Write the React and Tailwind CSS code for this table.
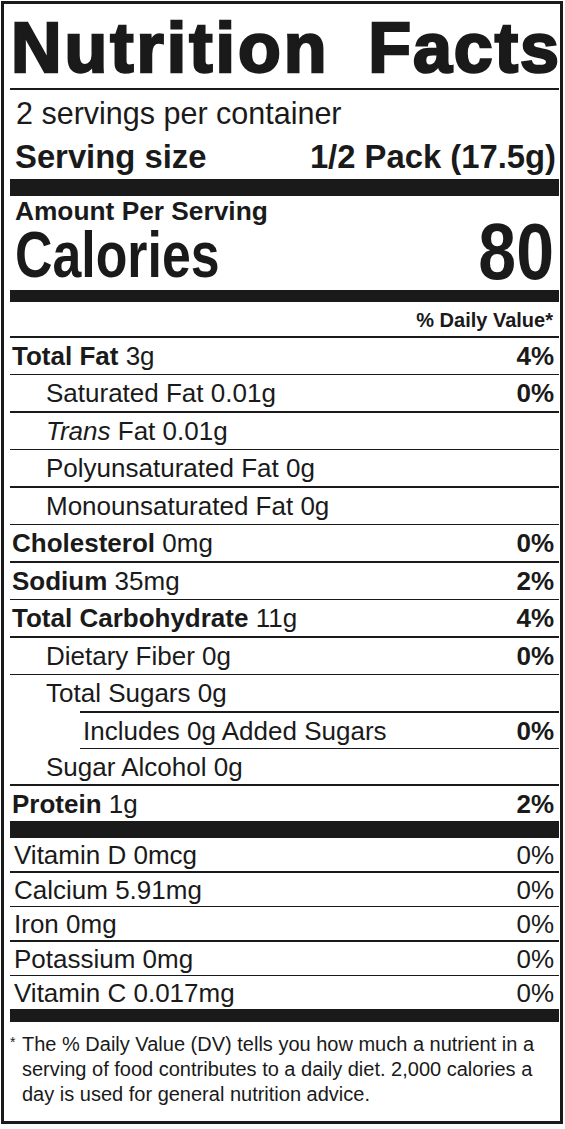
import React from "react";

// h = full row height, border included (preflight uses border-box)
const nutrients = [
	{ name: "Total Fat", amount: "3g", dv: "4%", bold: true, line: 1, h: "h-[37px]" },
	{ name: "Saturated Fat", amount: "0.01g", dv: "0%", indent: 1, line: 2, h: "h-[38px]" },
	{ name: "Trans", amount: "Fat 0.01g", italic: true, indent: 1, line: 1, h: "h-[37px]" },
	{ name: "Polyunsaturated Fat", amount: "0g", indent: 1, line: 2, h: "h-[38px]" },
	{ name: "Monounsaturated Fat", amount: "0g", indent: 1, line: 1, h: "h-[37px]" },
	{ name: "Cholesterol", amount: "0mg", dv: "0%", bold: true, line: 2, h: "h-[38px]" },
	{ name: "Sodium", amount: "35mg", dv: "2%", bold: true, line: 1, h: "h-[37px]" },
	{ name: "Total Carbohydrate", amount: "11g", dv: "4%", bold: true, line: 2, h: "h-[38px]" },
	{ name: "Dietary Fiber", amount: "0g", dv: "0%", indent: 1, line: 1, h: "h-[37px]" },
	{ name: "Total Sugars", amount: "0g", indent: 1, line: 0, h: "h-[36px]" },
	{ name: "Includes 0g Added Sugars", dv: "0%", indent: 2, line: 1, h: "h-[38px]" },
	{ name: "Sugar Alcohol", amount: "0g", indent: 1, line: 2, h: "h-[37px]" },
	{ name: "Protein", amount: "1g", dv: "2%", bold: true, line: 0, h: "h-[35px]" },
];

const vitamins = [
	{ label: "Vitamin D 0mcg", dv: "0%", line: 2, h: "h-[35px]" },
	{ label: "Calcium 5.91mg", dv: "0%", line: 1, h: "h-[34px]" },
	{ label: "Iron 0mg", dv: "0%", line: 2, h: "h-[35px]" },
	{ label: "Potassium 0mg", dv: "0%", line: 1, h: "h-[34px]" },
	{ label: "Vitamin C 0.017mg", dv: "0%", line: 0, h: "h-[33px]" },
];

const borderFor = (line) =>
	line === 2
		? "border-b-2 border-[#1a1a1a]"
		: line === 1
		? "border-b border-[#1a1a1a]"
		: "";

const NutrientRow = ({ item }) => {
	const label = (
		<span>
			{item.bold ? (
				<span className="font-bold">{item.name}</span>
			) : item.italic ? (
				<span className="italic">{item.name}</span>
			) : (
				<span>{item.name}</span>
			)}
			{item.amount && <span> {item.amount}</span>}
		</span>
	);

	// the added sugars row has its own short rule on top
	if (item.indent === 2) {
		return (
			<div
				className={`ml-[70px] flex items-center justify-between border-t-2 border-[#1a1a1a] pl-[3px] pr-[5px] ${
					item.h
				} ${borderFor(item.line)}`}>
				{label}
				<span className="font-bold">{item.dv}</span>
			</div>
		);
	}

	return (
		<div
			className={`flex items-center justify-between pr-[5px] ${item.h} ${
				item.indent ? "pl-[36px]" : "pl-[2px]"
			} ${borderFor(item.line)}`}>
			{label}
			{item.dv && <span className="font-bold">{item.dv}</span>}
		</div>
	);
};

export default function App() {
	return (
		<div className="min-h-screen bg-white pl-px pt-px font-['Liberation_Sans',Arial,Helvetica,sans-serif] text-[#1a1a1a]">
			<div className="w-[562px] border-[3px] border-[#1a1a1a] bg-white pb-[14px] pl-[6px] pr-px">
				{/* Title */}
				<h1 className="flex justify-between pb-[5px] pl-[1px] pt-[9px] text-[70px] font-bold leading-[70px] tracking-[3px] [-webkit-text-stroke:2.5px_#1a1a1a]">
					<span>Nutrition</span>
					<span className="-mr-[2px] tracking-[2px]">Facts</span>
				</h1>

				{/* Servings */}
				<div className="border-t-2 border-[#1a1a1a] pl-[6px] pt-[6px] text-[30.5px] leading-[34px]">
					2 servings per container
				</div>
				<div className="flex justify-between pl-[5px] pr-[3px] pt-[9px] text-[32.8px] font-bold leading-[36px]">
					<span>Serving size</span>
					<span>1/2 Pack (17.5g)</span>
				</div>
				<div className="mt-[4px] h-[17px] bg-[#1a1a1a]" />

				{/* Calories */}
				<div className="flex items-end justify-between pl-[5px] pr-[5px]">
					<div className="flex flex-col">
						<span className="pt-[2px] text-[26.3px] font-bold leading-[26px]">
							Amount Per Serving
						</span>
						<span className="inline-block origin-left scale-x-[0.81] text-[64px] font-bold leading-[62px]">
							Calories
						</span>
					</div>
					<span className="inline-block origin-right scale-x-[0.85] pb-[4px] text-[80px] font-bold leading-[60px]">
						80
					</span>
				</div>
				<div className="mt-[4px] h-[12px] bg-[#1a1a1a]" />

				{/* Daily value header */}
				<div className="flex h-[36px] items-center justify-end border-b-2 border-[#1a1a1a] pr-[6px] pt-[2px] text-[20px] font-bold leading-none">
					% Daily Value*
				</div>

				{/* Nutrients */}
				<div className="text-[26px] leading-none">
					{nutrients.map((item, i) => (
						<NutrientRow item={item} key={i} />
					))}
				</div>
				<div className="h-[17px] bg-[#1a1a1a]" />

				{/* Vitamins and minerals */}
				<div className="text-[26px] leading-none">
					{vitamins.map((v, i) => (
						<div
							key={i}
							className={`flex items-center justify-between pl-[4px] pr-[5px] ${v.h} ${borderFor(
								v.line
							)}`}>
							<span>{v.label}</span>
							<span>{v.dv}</span>
						</div>
					))}
				</div>
				<div className="h-[13px] bg-[#1a1a1a]" />

				{/* Footnote */}
				<div className="flex pr-[4px] pt-[10px]">
					<span className="w-[12px] shrink-0 text-[14px] leading-[20px]">*</span>
					<p className="text-[20px] leading-[25px]">
						The % Daily Value (DV) tells you how much a nutrient in a serving of
						food contributes to a daily diet. 2,000 calories a day is used for
						general nutrition advice.
					</p>
				</div>
			</div>
		</div>
	);
}
